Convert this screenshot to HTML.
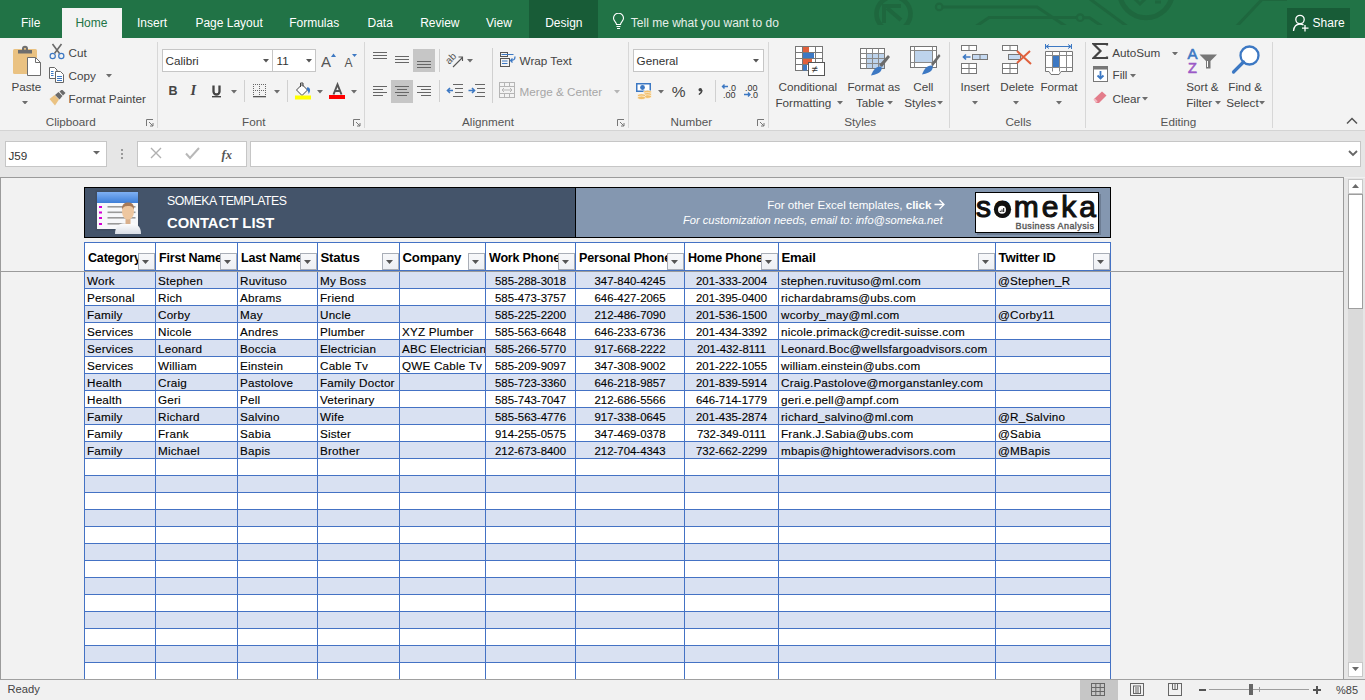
<!DOCTYPE html>
<html><head><meta charset="utf-8"><style>
html,body{margin:0;padding:0;width:1365px;height:700px;overflow:hidden;background:#F1F1F1;font-family:"Liberation Sans",sans-serif;}
#root{position:relative;width:1365px;height:700px;overflow:hidden;}
</style></head><body><div id="root">
<div style="position:absolute;left:0px;top:0px;width:1365px;height:700px;background:#F1F1F1"></div>
<div style="position:absolute;left:0px;top:0px;width:1365px;height:38px;background:#217346"></div>
<svg style="position:absolute;left:850px;top:0px;" width="437" height="25" viewBox="0 0 437 25">
<g fill="none" stroke="#1E673E" stroke-width="3">
<circle cx="43.5" cy="13.8" r="17" stroke-width="4.6"/>
<path d="M51 20 L37 8" stroke-width="4.2"/>
<path d="M34 23 V6 H51" stroke-width="4"/>
<circle cx="89.2" cy="6.9" r="3.3" stroke-width="2.2"/>
<path d="M92.5 6.9 H187 L217 27"/>
<path d="M125 27 L139 17.5 H226.8"/>
<circle cx="230.2" cy="17.7" r="3.3" stroke-width="2.2"/>
<path d="M233.5 17.7 H239.5 L253 27"/>
<path d="M240 -1 L278 27"/>
<circle cx="296" cy="-8.8" r="26.5" stroke-width="5"/>
<path d="M284 -2 L290 4 L296 -2" stroke-width="3"/>
<path d="M305 2 H311" stroke-width="3"/>
<path d="M386 27 L412 -0.5 H440"/>
</g></svg>
<div style="position:absolute;left:62px;top:8px;width:60px;height:30px;background:#F3F3F3"></div>
<div style="position:absolute;left:529px;top:0px;width:69px;height:38px;background:#185C37"></div>
<div style="position:absolute;top:16.94px;font-size:12px;line-height:12px;color:#fff;font-weight:normal;font-family:'Liberation Sans', sans-serif;white-space:nowrap;left:21px;">File</div>
<div style="position:absolute;top:16.94px;font-size:12px;line-height:12px;color:#fff;font-weight:normal;font-family:'Liberation Sans', sans-serif;white-space:nowrap;left:137px;">Insert</div>
<div style="position:absolute;top:16.94px;font-size:12px;line-height:12px;color:#fff;font-weight:normal;font-family:'Liberation Sans', sans-serif;white-space:nowrap;left:195.4px;">Page Layout</div>
<div style="position:absolute;top:16.94px;font-size:12px;line-height:12px;color:#fff;font-weight:normal;font-family:'Liberation Sans', sans-serif;white-space:nowrap;left:289.2px;">Formulas</div>
<div style="position:absolute;top:16.94px;font-size:12px;line-height:12px;color:#fff;font-weight:normal;font-family:'Liberation Sans', sans-serif;white-space:nowrap;left:367.5px;">Data</div>
<div style="position:absolute;top:16.94px;font-size:12px;line-height:12px;color:#fff;font-weight:normal;font-family:'Liberation Sans', sans-serif;white-space:nowrap;left:420.2px;">Review</div>
<div style="position:absolute;top:16.94px;font-size:12px;line-height:12px;color:#fff;font-weight:normal;font-family:'Liberation Sans', sans-serif;white-space:nowrap;left:486px;">View</div>
<div style="position:absolute;top:16.94px;font-size:12px;line-height:12px;color:#fff;font-weight:normal;font-family:'Liberation Sans', sans-serif;white-space:nowrap;left:545.2px;">Design</div>
<div style="position:absolute;top:16.94px;font-size:12px;line-height:12px;color:#217346;font-weight:normal;font-family:'Liberation Sans', sans-serif;white-space:nowrap;left:75.4px;">Home</div>
<svg style="position:absolute;left:612px;top:13px;" width="14" height="17" viewBox="0 0 14 17"><g fill="none" stroke="#fff" stroke-width="1.1">
<path d="M4.5 11.5 C4.5 9 1.5 8 1.5 5.2 A5 5 0 0 1 11.5 5.2 C11.5 8 8.5 9 8.5 11.5 Z"/>
<path d="M4.5 13.5 H8.5 M5 15.5 H8"/></g></svg>
<div style="position:absolute;top:16.94px;font-size:12px;line-height:12px;color:#E6EFE9;font-weight:normal;font-family:'Liberation Sans', sans-serif;white-space:nowrap;left:630.8px;">Tell me what you want to do</div>
<div style="position:absolute;left:1287px;top:8px;width:63px;height:30px;background:#185C37"></div>
<svg style="position:absolute;left:1292px;top:14px;" width="18" height="18" viewBox="0 0 18 18"><g fill="none" stroke="#fff" stroke-width="1.3">
<circle cx="8" cy="5.5" r="4.2"/>
<path d="M1.5 17 C2 12 4.5 10 8 10 C9.5 10 10.5 10.3 11.5 11"/>
<path d="M13 11 V17.5 M10 14.2 H16.5"/></g></svg>
<div style="position:absolute;top:16.94px;font-size:12px;line-height:12px;color:#fff;font-weight:normal;font-family:'Liberation Sans', sans-serif;white-space:nowrap;left:1312.6px;">Share</div>
<div style="position:absolute;left:0px;top:38px;width:1365px;height:92px;background:#F3F3F3"></div>
<div style="position:absolute;left:0px;top:130px;width:1365px;height:1px;background:#D4D4D4"></div>
<div style="position:absolute;left:157px;top:42px;width:1px;height:86px;background:#D7D7D7"></div>
<div style="position:absolute;left:364px;top:42px;width:1px;height:86px;background:#D7D7D7"></div>
<div style="position:absolute;left:628px;top:42px;width:1px;height:86px;background:#D7D7D7"></div>
<div style="position:absolute;left:768px;top:42px;width:1px;height:86px;background:#D7D7D7"></div>
<div style="position:absolute;left:949px;top:42px;width:1px;height:86px;background:#D7D7D7"></div>
<div style="position:absolute;left:1085px;top:42px;width:1px;height:86px;background:#D7D7D7"></div>
<div style="position:absolute;left:1272px;top:42px;width:1px;height:86px;background:#D7D7D7"></div>
<svg style="position:absolute;left:12px;top:45px;" width="31" height="32" viewBox="0 0 31 32">
<rect x="1" y="4" width="24" height="25" rx="1.5" fill="#EAC282"/>
<path d="M6 8.5 V5 H10 V3.8 A3 3 0 0 1 16 3.8 V5 H20 V8.5 Z" fill="#6E6E6E"/>
<circle cx="13" cy="3.8" r="1.1" fill="#EAC282"/>
<path d="M15.5 12.5 H23.5 L28.5 17.5 V30.5 H15.5 Z" fill="#fff" stroke="#6E6E6E" stroke-width="1"/>
<path d="M23.5 12.5 V17.5 H28.5" fill="none" stroke="#6E6E6E" stroke-width="1"/>
</svg>
<div style="position:absolute;top:80.80px;font-size:11.7px;line-height:11.7px;color:#444444;font-weight:normal;font-family:'Liberation Sans', sans-serif;white-space:nowrap;left:11.4px;">Paste</div>
<svg style="position:absolute;left:21.5px;top:100.5px;" width="6" height="3.5" viewBox="0 0 6 3.5"><path d="M0 0 H6 L3.0 3.5 Z" fill="#6D6D6D"/></svg>
<svg style="position:absolute;left:49px;top:43px;" width="16" height="17" viewBox="0 0 16 17"><g fill="none">
<path d="M3.5 1 L10.5 10.5 M12.5 1 L5.5 10.5" stroke="#6A6A6A" stroke-width="1.6"/>
<circle cx="3.7" cy="13" r="2.6" stroke="#3C78C3" stroke-width="1.2"/>
<circle cx="12.3" cy="13" r="2.6" stroke="#3C78C3" stroke-width="1.2"/></g></svg>
<div style="position:absolute;top:46.80px;font-size:11.7px;line-height:11.7px;color:#444444;font-weight:normal;font-family:'Liberation Sans', sans-serif;white-space:nowrap;left:68.6px;">Cut</div>
<svg style="position:absolute;left:48px;top:67px;" width="17" height="16" viewBox="0 0 17 16">
<path d="M1.5 0.5 H6.5 L9 3 V11.5 H1.5 Z" fill="#fff" stroke="#666"/>
<path d="M3 4.5 H5.5 M3 6.5 H5.5 M3 8.5 H5.5" stroke="#3C78C3"/>
<path d="M7.5 4.5 H12.5 L15.5 7.5 V15.5 H7.5 Z" fill="#fff" stroke="#666"/>
<path d="M9 9.5 H14 M9 11.5 H14 M9 13.5 H14" stroke="#3C78C3"/>
</svg>
<div style="position:absolute;top:70.10px;font-size:11.7px;line-height:11.7px;color:#444444;font-weight:normal;font-family:'Liberation Sans', sans-serif;white-space:nowrap;left:68.6px;">Copy</div>
<svg style="position:absolute;left:105.5px;top:74.0px;" width="6" height="3.5" viewBox="0 0 6 3.5"><path d="M0 0 H6 L3.0 3.5 Z" fill="#6D6D6D"/></svg>
<svg style="position:absolute;left:49px;top:90px;" width="17" height="16" viewBox="0 0 17 16">
<path d="M0.5 9 L5.5 5 L10 9.5 L6 15.5 Z" fill="#EAC282"/>
<path d="M6 5 L9.5 2 L13.5 6 L10.5 9.5 Z" fill="#6A6A6A"/>
<path d="M10.5 1.5 L13 -0.5 L16.5 3 L14 5.5 Z" fill="#6A6A6A"/>
</svg>
<div style="position:absolute;top:92.70px;font-size:11.7px;line-height:11.7px;color:#444444;font-weight:normal;font-family:'Liberation Sans', sans-serif;white-space:nowrap;left:68.6px;">Format Painter</div>
<div style="position:absolute;top:115.60px;font-size:11.7px;line-height:11.7px;color:#555;font-weight:normal;font-family:'Liberation Sans', sans-serif;white-space:nowrap;left:45.7px;">Clipboard</div>
<svg style="position:absolute;left:146px;top:119px;" width="8" height="8" viewBox="0 0 8 8"><g fill="none" stroke="#777" stroke-width="1"><path d="M0.5 7 V0.5 H7"/><path d="M3 3 L7 7 M7 4 V7 H4"/></g></svg>
<div style="position:absolute;left:162px;top:49px;width:111px;height:23px;background:#fff;box-sizing:border-box;border:1px solid #C6C6C6"></div>
<div style="position:absolute;left:272px;top:49px;width:44px;height:23px;background:#fff;box-sizing:border-box;border:1px solid #C6C6C6"></div>
<div style="position:absolute;top:54.70px;font-size:11.7px;line-height:11.7px;color:#333;font-weight:normal;font-family:'Liberation Sans', sans-serif;white-space:nowrap;left:165.5px;">Calibri</div>
<div style="position:absolute;top:54.70px;font-size:11.7px;line-height:11.7px;color:#333;font-weight:normal;font-family:'Liberation Sans', sans-serif;white-space:nowrap;left:276.5px;">11</div>
<svg style="position:absolute;left:262.5px;top:59.0px;" width="6" height="3.5" viewBox="0 0 6 3.5"><path d="M0 0 H6 L3.0 3.5 Z" fill="#555"/></svg>
<svg style="position:absolute;left:305.5px;top:59.0px;" width="6" height="3.5" viewBox="0 0 6 3.5"><path d="M0 0 H6 L3.0 3.5 Z" fill="#555"/></svg>
<svg style="position:absolute;left:321px;top:53px;" width="16" height="15" viewBox="0 0 16 15"><text x="0" y="13.5" font-family="Liberation Sans" font-size="15" fill="#555">A</text>
<path d="M10 4 L12.5 0.5 L15 4 Z" fill="#3C78C3"/></svg>
<svg style="position:absolute;left:344px;top:53px;" width="14" height="15" viewBox="0 0 14 15"><text x="0.5" y="13.5" font-family="Liberation Sans" font-size="12" fill="#555">A</text>
<path d="M8 1 H13 L10.5 4 Z" fill="#3C78C3"/></svg>
<div style="position:absolute;top:84.92px;font-size:12.5px;line-height:12.5px;color:#444;font-weight:bold;font-family:'Liberation Sans', sans-serif;white-space:nowrap;left:168.5px;">B</div>
<div style="position:absolute;top:83.23px;font-size:14.5px;line-height:14.5px;color:#444;font-weight:bold;font-family:'Liberation Serif', serif;white-space:nowrap;font-style:italic;left:190.5px;">I</div>
<svg style="position:absolute;left:211px;top:85px;" width="11" height="13" viewBox="0 0 11 13"><path d="M2.5 0.5 V6.5 A3 3 0 0 0 8.5 6.5 V0.5" fill="none" stroke="#444" stroke-width="2.3"/>
<rect x="1" y="11" width="9" height="1.4" fill="#444"/></svg>
<svg style="position:absolute;left:231.0px;top:90.0px;" width="6" height="3.5" viewBox="0 0 6 3.5"><path d="M0 0 H6 L3.0 3.5 Z" fill="#6D6D6D"/></svg>
<div style="position:absolute;left:244px;top:80px;width:1px;height:22px;background:#D0D0D0"></div>
<svg style="position:absolute;left:253px;top:84px;" width="14" height="14" viewBox="0 0 14 14"><rect x="0" y="0" width="1" height="1" fill="#666"/><rect x="0" y="6" width="1" height="1" fill="#666"/><rect x="2" y="0" width="1" height="1" fill="#666"/><rect x="2" y="6" width="1" height="1" fill="#666"/><rect x="4" y="0" width="1" height="1" fill="#666"/><rect x="4" y="6" width="1" height="1" fill="#666"/><rect x="6" y="0" width="1" height="1" fill="#666"/><rect x="6" y="6" width="1" height="1" fill="#666"/><rect x="8" y="0" width="1" height="1" fill="#666"/><rect x="8" y="6" width="1" height="1" fill="#666"/><rect x="10" y="0" width="1" height="1" fill="#666"/><rect x="10" y="6" width="1" height="1" fill="#666"/><rect x="12" y="0" width="1" height="1" fill="#666"/><rect x="12" y="6" width="1" height="1" fill="#666"/><rect x="0" y="0" width="1" height="1" fill="#666"/><rect x="6" y="0" width="1" height="1" fill="#666"/><rect x="12" y="0" width="1" height="1" fill="#666"/><rect x="0" y="2" width="1" height="1" fill="#666"/><rect x="6" y="2" width="1" height="1" fill="#666"/><rect x="12" y="2" width="1" height="1" fill="#666"/><rect x="0" y="4" width="1" height="1" fill="#666"/><rect x="6" y="4" width="1" height="1" fill="#666"/><rect x="12" y="4" width="1" height="1" fill="#666"/><rect x="0" y="6" width="1" height="1" fill="#666"/><rect x="6" y="6" width="1" height="1" fill="#666"/><rect x="12" y="6" width="1" height="1" fill="#666"/><rect x="0" y="8" width="1" height="1" fill="#666"/><rect x="6" y="8" width="1" height="1" fill="#666"/><rect x="12" y="8" width="1" height="1" fill="#666"/><rect x="0" y="10" width="1" height="1" fill="#666"/><rect x="6" y="10" width="1" height="1" fill="#666"/><rect x="12" y="10" width="1" height="1" fill="#666"/><rect x="0" y="12" width="13" height="1.3" fill="#555"/></svg>
<svg style="position:absolute;left:273.5px;top:90.0px;" width="6" height="3.5" viewBox="0 0 6 3.5"><path d="M0 0 H6 L3.0 3.5 Z" fill="#6D6D6D"/></svg>
<div style="position:absolute;left:287px;top:80px;width:1px;height:22px;background:#D0D0D0"></div>
<svg style="position:absolute;left:294px;top:82px;" width="18" height="18" viewBox="0 0 18 18">
<path d="M2.5 8 L8 2.5 L13.5 8 L8 13.5 Z" fill="#fff" stroke="#444" stroke-width="1"/>
<path d="M6.5 5 V1 H9 V4.5" fill="none" stroke="#444" stroke-width="1"/>
<path d="M13.5 5 C16.5 6 17 9 14.5 12 C14.5 10 14 8.5 12.5 7.5 Z" fill="#3C78C3"/>
<rect x="1" y="13.5" width="16" height="4" fill="#FFFF00"/></svg>
<svg style="position:absolute;left:316.5px;top:90.0px;" width="6" height="3.5" viewBox="0 0 6 3.5"><path d="M0 0 H6 L3.0 3.5 Z" fill="#6D6D6D"/></svg>
<svg style="position:absolute;left:328px;top:82px;" width="18" height="18" viewBox="0 0 18 18"><path d="M5.5 12.5 L9.5 2.5 L13.5 12.5 M7 9 H12" fill="none" stroke="#555" stroke-width="2"/>
<rect x="1" y="13" width="16" height="4" fill="#FF0000"/></svg>
<svg style="position:absolute;left:351.0px;top:90.0px;" width="6" height="3.5" viewBox="0 0 6 3.5"><path d="M0 0 H6 L3.0 3.5 Z" fill="#6D6D6D"/></svg>
<div style="position:absolute;top:115.60px;font-size:11.7px;line-height:11.7px;color:#555;font-weight:normal;font-family:'Liberation Sans', sans-serif;white-space:nowrap;left:242px;">Font</div>
<svg style="position:absolute;left:353px;top:119px;" width="8" height="8" viewBox="0 0 8 8"><g fill="none" stroke="#777" stroke-width="1"><path d="M0.5 7 V0.5 H7"/><path d="M3 3 L7 7 M7 4 V7 H4"/></g></svg>
<svg style="position:absolute;left:373px;top:52px;" width="14" height="9" viewBox="0 0 14 9"><rect x="0" y="0" width="14" height="1" fill="#666"/><rect x="0" y="3" width="14" height="1" fill="#666"/><rect x="0" y="6" width="14" height="1" fill="#666"/></svg>
<svg style="position:absolute;left:395px;top:56px;" width="14" height="9" viewBox="0 0 14 9"><rect x="0" y="0" width="14" height="1" fill="#666"/><rect x="0" y="3" width="14" height="1" fill="#666"/><rect x="0" y="6" width="14" height="1" fill="#666"/></svg>
<div style="position:absolute;left:413px;top:49px;width:22px;height:23px;background:#C6C6C6"></div>
<svg style="position:absolute;left:417px;top:61px;" width="14" height="9" viewBox="0 0 14 9"><rect x="0" y="0" width="14" height="1" fill="#666"/><rect x="0" y="3" width="14" height="1" fill="#666"/><rect x="0" y="6" width="14" height="1" fill="#666"/></svg>
<svg style="position:absolute;left:446px;top:51px;" width="20" height="18" viewBox="0 0 20 18"><text x="0" y="10" font-family="Liberation Sans" font-size="10" fill="#555" transform="rotate(-45 6 8)">ab</text>
<path d="M7 16 L16.5 6.5 M12.5 6 H16.5 V10" fill="none" stroke="#555" stroke-width="1.1"/></svg>
<svg style="position:absolute;left:467.0px;top:59.0px;" width="6" height="3.5" viewBox="0 0 6 3.5"><path d="M0 0 H6 L3.0 3.5 Z" fill="#6D6D6D"/></svg>
<div style="position:absolute;left:439px;top:49px;width:1px;height:23px;background:#D0D0D0"></div>
<div style="position:absolute;left:492px;top:48px;width:1px;height:55px;background:#D0D0D0"></div>
<svg style="position:absolute;left:499px;top:51px;" width="19" height="17" viewBox="0 0 19 17"><g fill="none" stroke="#555" stroke-width="1">
<rect x="1.5" y="1.5" width="7" height="4"/><rect x="1.5" y="7.5" width="9" height="8"/></g>
<path d="M2.5 3.5 H14.5 M3 10 H8.5 M3 12.5 H8.5" stroke="#3C78C3" stroke-width="1"/>
<path d="M16 5.5 C16 9 14.5 9.5 11.5 9.5 M13.5 7.5 L11.5 9.5 L13.5 11.5" fill="none" stroke="#3C78C3" stroke-width="1.3"/></svg>
<div style="position:absolute;top:55.10px;font-size:11.7px;line-height:11.7px;color:#444444;font-weight:normal;font-family:'Liberation Sans', sans-serif;white-space:nowrap;left:519.6px;">Wrap Text</div>
<svg style="position:absolute;left:373px;top:86px;" width="14" height="12" viewBox="0 0 14 12"><rect x="0" y="0" width="14" height="1" fill="#666"/><rect x="0" y="3" width="10" height="1" fill="#666"/><rect x="0" y="6" width="14" height="1" fill="#666"/><rect x="0" y="9" width="10" height="1" fill="#666"/></svg>
<div style="position:absolute;left:391px;top:80px;width:22px;height:23px;background:#C6C6C6"></div>
<svg style="position:absolute;left:395px;top:86px;" width="14" height="12" viewBox="0 0 14 12"><rect x="0.0" y="0" width="14" height="1" fill="#666"/><rect x="2.0" y="3" width="10" height="1" fill="#666"/><rect x="0.0" y="6" width="14" height="1" fill="#666"/><rect x="2.0" y="9" width="10" height="1" fill="#666"/></svg>
<svg style="position:absolute;left:417px;top:86px;" width="14" height="12" viewBox="0 0 14 12"><rect x="0" y="0" width="14" height="1" fill="#666"/><rect x="4" y="3" width="10" height="1" fill="#666"/><rect x="0" y="6" width="14" height="1" fill="#666"/><rect x="4" y="9" width="10" height="1" fill="#666"/></svg>
<div style="position:absolute;left:439px;top:80px;width:1px;height:22px;background:#D0D0D0"></div>
<svg style="position:absolute;left:446px;top:84px;" width="18" height="13" viewBox="0 0 18 13"><path d="M7 0.5 H17 M9 4.5 H17 M9 8.5 H17 M7 12.5 H17" stroke="#666"/>
<path d="M7 6.5 H1.5 M4 4 L1.5 6.5 L4 9" fill="none" stroke="#3C78C3" stroke-width="1.6"/></svg>
<svg style="position:absolute;left:468px;top:84px;" width="18" height="13" viewBox="0 0 18 13"><path d="M7 0.5 H17 M9 4.5 H17 M9 8.5 H17 M7 12.5 H17" stroke="#666"/>
<path d="M0.5 6.5 H6.5 M4 4 L6.5 6.5 L4 9" fill="none" stroke="#3C78C3" stroke-width="1.6"/></svg>
<svg style="position:absolute;left:499px;top:82px;" width="17" height="17" viewBox="0 0 17 17"><g fill="none" stroke="#B5B5B5" stroke-width="1"><rect x="0.5" y="0.5" width="15" height="15"/>
<path d="M0.5 4.5 H15.5 M0.5 11.5 H15.5 M5.5 0.5 V4.5 M10.5 0.5 V4.5 M5.5 11.5 V15.5 M10.5 11.5 V15.5 M3 8 H13 M5 6 L3 8 L5 10 M11 6 L13 8 L11 10"/></g></svg>
<div style="position:absolute;top:85.90px;font-size:11.7px;line-height:11.7px;color:#A6A6A6;font-weight:normal;font-family:'Liberation Sans', sans-serif;white-space:nowrap;left:519.6px;">Merge &amp; Center</div>
<svg style="position:absolute;left:613.5px;top:90.0px;" width="6" height="3.5" viewBox="0 0 6 3.5"><path d="M0 0 H6 L3.0 3.5 Z" fill="#B5B5B5"/></svg>
<div style="position:absolute;top:115.60px;font-size:11.7px;line-height:11.7px;color:#555;font-weight:normal;font-family:'Liberation Sans', sans-serif;white-space:nowrap;left:462px;">Alignment</div>
<svg style="position:absolute;left:617px;top:119px;" width="8" height="8" viewBox="0 0 8 8"><g fill="none" stroke="#777" stroke-width="1"><path d="M0.5 7 V0.5 H7"/><path d="M3 3 L7 7 M7 4 V7 H4"/></g></svg>
<div style="position:absolute;left:633px;top:49px;width:131px;height:23px;background:#fff;box-sizing:border-box;border:1px solid #C6C6C6"></div>
<div style="position:absolute;top:54.50px;font-size:11.7px;line-height:11.7px;color:#333;font-weight:normal;font-family:'Liberation Sans', sans-serif;white-space:nowrap;left:636.6px;">General</div>
<svg style="position:absolute;left:753.0px;top:59.0px;" width="6" height="3.5" viewBox="0 0 6 3.5"><path d="M0 0 H6 L3.0 3.5 Z" fill="#555"/></svg>
<svg style="position:absolute;left:635px;top:82px;" width="18" height="18" viewBox="0 0 18 18"><rect x="1" y="1" width="15" height="9" fill="#3C78C3"/>
<rect x="2.5" y="2.5" width="12" height="6" fill="#fff"/>
<circle cx="7.5" cy="5.5" r="2.4" fill="#3C78C3"/>
<g fill="#F0BE6A" stroke="#fff" stroke-width="0.6">
<ellipse cx="12.5" cy="10" rx="4" ry="1.8"/><ellipse cx="12.5" cy="12.3" rx="4" ry="1.8"/><ellipse cx="12.5" cy="14.6" rx="4" ry="1.8"/>
<ellipse cx="6.5" cy="13.5" rx="4" ry="1.8"/><ellipse cx="6.5" cy="15.8" rx="4" ry="1.8"/></g></svg>
<svg style="position:absolute;left:657.5px;top:90.0px;" width="6" height="3.5" viewBox="0 0 6 3.5"><path d="M0 0 H6 L3.0 3.5 Z" fill="#6D6D6D"/></svg>
<div style="position:absolute;top:83.88px;font-size:15.5px;line-height:15.5px;color:#444;font-weight:normal;font-family:'Liberation Sans', sans-serif;white-space:nowrap;left:671.8px;">%</div>
<svg style="position:absolute;left:696px;top:87px;" width="8" height="8" viewBox="0 0 8 8"><circle cx="4.3" cy="2.8" r="1.8" fill="#444"/><path d="M5.9 3 C6 5 4.8 6.5 2.8 7.5" fill="none" stroke="#444" stroke-width="1.3"/></svg>
<div style="position:absolute;left:715px;top:80px;width:1px;height:22px;background:#D0D0D0"></div>
<svg style="position:absolute;left:721px;top:83px;" width="18" height="15" viewBox="0 0 18 15"><path d="M7 3.5 H1.5 M3.5 1.5 L1.5 3.5 L3.5 5.5" fill="none" stroke="#3C78C3" stroke-width="1.4"/>
<text x="7.5" y="7.5" font-family="Liberation Sans" font-size="9" fill="#333">.0</text>
<text x="2" y="15" font-family="Liberation Sans" font-size="9" fill="#333">.00</text></svg>
<svg style="position:absolute;left:743px;top:83px;" width="18" height="15" viewBox="0 0 18 15"><text x="2" y="7.5" font-family="Liberation Sans" font-size="9" fill="#333">.00</text>
<path d="M1 11.5 H7 M5 9.5 L7 11.5 L5 13.5" fill="none" stroke="#3C78C3" stroke-width="1.4"/>
<text x="7.5" y="15" font-family="Liberation Sans" font-size="9" fill="#333">.0</text></svg>
<div style="position:absolute;top:115.60px;font-size:11.7px;line-height:11.7px;color:#555;font-weight:normal;font-family:'Liberation Sans', sans-serif;white-space:nowrap;left:670.6px;">Number</div>
<svg style="position:absolute;left:757px;top:119px;" width="8" height="8" viewBox="0 0 8 8"><g fill="none" stroke="#777" stroke-width="1"><path d="M0.5 7 V0.5 H7"/><path d="M3 3 L7 7 M7 4 V7 H4"/></g></svg>
<svg style="position:absolute;left:794px;top:45px;" width="32" height="32" viewBox="0 0 32 32">
<g fill="#fff" stroke="#777" stroke-width="1">
<rect x="1.5" y="1.5" width="27" height="24"/></g>
<rect x="9" y="2" width="6" height="5.5" fill="#E0603C"/>
<rect x="9" y="8" width="11" height="5.5" fill="#3C78C3"/>
<rect x="9" y="14" width="9" height="5.5" fill="#E0603C"/>
<rect x="9" y="20" width="4" height="5.5" fill="#3C78C3"/>
<path d="M1.5 7.5 H28.5 M1.5 13.5 H28.5 M1.5 19.5 H28.5 M8.5 1.5 V25.5 M21.5 1.5 V25.5" stroke="#777" fill="none"/>
<rect x="14.5" y="17.5" width="16" height="13" fill="#fff" stroke="#555"/>
<text x="17.5" y="28" font-family="Liberation Sans" font-size="11" fill="#333">≠</text></svg>
<div style="position:absolute;top:80.90px;font-size:11.7px;line-height:11.7px;color:#444444;font-weight:normal;font-family:'Liberation Sans', sans-serif;white-space:nowrap;left:778.5px;">Conditional</div>
<div style="position:absolute;top:96.60px;font-size:11.7px;line-height:11.7px;color:#444444;font-weight:normal;font-family:'Liberation Sans', sans-serif;white-space:nowrap;left:775.4px;">Formatting</div>
<svg style="position:absolute;left:836.5px;top:101.0px;" width="6" height="3.5" viewBox="0 0 6 3.5"><path d="M0 0 H6 L3.0 3.5 Z" fill="#6D6D6D"/></svg>
<svg style="position:absolute;left:859px;top:47px;" width="32" height="30" viewBox="0 0 32 30">
<rect x="1.5" y="1.5" width="24" height="20" fill="#fff" stroke="#777"/>
<rect x="7" y="6" width="18" height="15" fill="#BDD3EC"/>
<path d="M1.5 6.5 H25.5 M1.5 11.5 H25.5 M1.5 16.5 H25.5 M7.5 1.5 V21.5 M13.5 1.5 V21.5 M19.5 1.5 V21.5" stroke="#888" fill="none"/>
<path d="M20 18 L29 8 L31 10 L23 20 Z" fill="#6B6B6B"/>
<path d="M12 28.5 C14 23 17 19 22 19.5 C24 22 22 27 12 28.5 Z" fill="#3C78C3"/></svg>
<div style="position:absolute;top:80.90px;font-size:11.7px;line-height:11.7px;color:#444444;font-weight:normal;font-family:'Liberation Sans', sans-serif;white-space:nowrap;left:847.4px;">Format as</div>
<div style="position:absolute;top:96.60px;font-size:11.7px;line-height:11.7px;color:#444444;font-weight:normal;font-family:'Liberation Sans', sans-serif;white-space:nowrap;left:856px;">Table</div>
<svg style="position:absolute;left:886.5px;top:101.0px;" width="6" height="3.5" viewBox="0 0 6 3.5"><path d="M0 0 H6 L3.0 3.5 Z" fill="#6D6D6D"/></svg>
<svg style="position:absolute;left:909px;top:45px;" width="32" height="30" viewBox="0 0 32 30">
<rect x="1.5" y="1.5" width="26" height="21" fill="#fff" stroke="#777"/>
<rect x="6" y="6" width="17" height="11" fill="#BDD3EC"/>
<path d="M1.5 5.5 H27.5 M1.5 17.5 H27.5 M5.5 1.5 V22.5 M23.5 1.5 V22.5" stroke="#888" fill="none"/>
<path d="M22 19 L30 9 L31.5 11 L24 21 Z" fill="#6B6B6B"/>
<path d="M13 29.5 C15 24 18 20 23 20.5 C25 23 23 28 13 29.5 Z" fill="#3C78C3"/></svg>
<div style="position:absolute;top:80.90px;font-size:11.7px;line-height:11.7px;color:#444444;font-weight:normal;font-family:'Liberation Sans', sans-serif;white-space:nowrap;left:913.2px;">Cell</div>
<div style="position:absolute;top:96.60px;font-size:11.7px;line-height:11.7px;color:#444444;font-weight:normal;font-family:'Liberation Sans', sans-serif;white-space:nowrap;left:904.2px;">Styles</div>
<svg style="position:absolute;left:936.5px;top:101.0px;" width="6" height="3.5" viewBox="0 0 6 3.5"><path d="M0 0 H6 L3.0 3.5 Z" fill="#6D6D6D"/></svg>
<div style="position:absolute;top:115.60px;font-size:11.7px;line-height:11.7px;color:#555;font-weight:normal;font-family:'Liberation Sans', sans-serif;white-space:nowrap;left:844.3px;">Styles</div>
<svg style="position:absolute;left:961px;top:45px;" width="28" height="29" viewBox="0 0 28 29"><g fill="#fff" stroke="#777">
<rect x="0.5" y="0.5" width="15" height="5"/><path d="M8 0.5 V5.5"/>
<rect x="11.5" y="9.5" width="15" height="5" fill="#C5D9F1"/><path d="M19 9.5 V14.5"/>
<rect x="0.5" y="18.5" width="15" height="10"/><path d="M8 18.5 V28.5 M0.5 23.5 H15.5"/></g>
<path d="M9.5 12 H2.5 M5 9.5 L2.5 12 L5 14.5" fill="none" stroke="#3C78C3" stroke-width="1.7"/></svg>
<div style="position:absolute;top:80.90px;font-size:11.7px;line-height:11.7px;color:#444444;font-weight:normal;font-family:'Liberation Sans', sans-serif;white-space:nowrap;left:960.4px;">Insert</div>
<svg style="position:absolute;left:971.6px;top:101.0px;" width="6" height="3.5" viewBox="0 0 6 3.5"><path d="M0 0 H6 L3.0 3.5 Z" fill="#6D6D6D"/></svg>
<svg style="position:absolute;left:1002px;top:45px;" width="31" height="29" viewBox="0 0 31 29"><g fill="#fff" stroke="#777">
<rect x="0.5" y="0.5" width="15" height="5"/><path d="M8 0.5 V5.5"/>
<rect x="6.5" y="9.5" width="12" height="5" fill="#C5D9F1"/>
<rect x="0.5" y="18.5" width="15" height="10"/><path d="M8 18.5 V28.5 M0.5 23.5 H15.5"/></g>
<path d="M15 6 L29 19 M28 6 L15 18" stroke="#E0603C" stroke-width="2"/></svg>
<div style="position:absolute;top:80.90px;font-size:11.7px;line-height:11.7px;color:#444444;font-weight:normal;font-family:'Liberation Sans', sans-serif;white-space:nowrap;left:1000.3px;">Delete</div>
<svg style="position:absolute;left:1013.3px;top:101.0px;" width="6" height="3.5" viewBox="0 0 6 3.5"><path d="M0 0 H6 L3.0 3.5 Z" fill="#6D6D6D"/></svg>
<svg style="position:absolute;left:1044px;top:44px;" width="30" height="32" viewBox="0 0 30 32">
<path d="M1.5 0 V5 M27.5 0 V5 M2 2.5 H27 M5 0.5 L2 2.5 L5 4.5 M24 0.5 L27 2.5 L24 4.5" fill="none" stroke="#3C78C3" stroke-width="1"/>
<path d="M1.5 7.5 H28.5 V27.5 H17 L15 30.5 H7 L5 27.5 H1.5 Z" fill="#fff" stroke="#777"/>
<path d="M1.5 11.5 H28.5 M1.5 23.5 H28.5 M8.5 7.5 V27.5 M15.5 7.5 V27.5 M22.5 7.5 V27.5" stroke="#888" fill="none"/>
<rect x="9" y="12" width="6" height="11" fill="#3C78C3"/></svg>
<div style="position:absolute;top:80.90px;font-size:11.7px;line-height:11.7px;color:#444444;font-weight:normal;font-family:'Liberation Sans', sans-serif;white-space:nowrap;left:1040.4px;">Format</div>
<svg style="position:absolute;left:1056.4px;top:101.0px;" width="6" height="3.5" viewBox="0 0 6 3.5"><path d="M0 0 H6 L3.0 3.5 Z" fill="#6D6D6D"/></svg>
<div style="position:absolute;top:115.60px;font-size:11.7px;line-height:11.7px;color:#555;font-weight:normal;font-family:'Liberation Sans', sans-serif;white-space:nowrap;left:1005.4px;">Cells</div>
<svg style="position:absolute;left:1092px;top:43px;" width="17" height="17" viewBox="0 0 17 17"><path d="M15 2.5 V1 H1.5 L8.5 8 L1.5 15 H15 V13.5" fill="none" stroke="#444" stroke-width="2.2"/></svg>
<div style="position:absolute;top:46.90px;font-size:11.7px;line-height:11.7px;color:#444444;font-weight:normal;font-family:'Liberation Sans', sans-serif;white-space:nowrap;left:1112.2px;">AutoSum</div>
<svg style="position:absolute;left:1171.5px;top:51.5px;" width="6" height="3.5" viewBox="0 0 6 3.5"><path d="M0 0 H6 L3.0 3.5 Z" fill="#6D6D6D"/></svg>
<svg style="position:absolute;left:1093px;top:66px;" width="16" height="17" viewBox="0 0 16 17"><rect x="0.5" y="0.5" width="14" height="15" fill="#fff" stroke="#777"/>
<rect x="0.5" y="0.5" width="14" height="3" fill="#777"/>
<path d="M7.5 5 V12.5 M4.5 9.5 L7.5 12.5 L10.5 9.5" fill="none" stroke="#3C78C3" stroke-width="1.8"/></svg>
<div style="position:absolute;top:69.40px;font-size:11.7px;line-height:11.7px;color:#444444;font-weight:normal;font-family:'Liberation Sans', sans-serif;white-space:nowrap;left:1112.5px;">Fill</div>
<svg style="position:absolute;left:1129.5px;top:74.0px;" width="6" height="3.5" viewBox="0 0 6 3.5"><path d="M0 0 H6 L3.0 3.5 Z" fill="#6D6D6D"/></svg>
<svg style="position:absolute;left:1093px;top:90px;" width="15" height="14" viewBox="0 0 15 14"><path d="M1 9 L9 1.5 L13.5 5.5 L6 13 L3 13 Z" fill="#E37C8A"/><path d="M1 9 L4 12" stroke="#F3B9C1" stroke-width="2"/></svg>
<div style="position:absolute;top:92.60px;font-size:11.7px;line-height:11.7px;color:#444444;font-weight:normal;font-family:'Liberation Sans', sans-serif;white-space:nowrap;left:1112.5px;">Clear</div>
<svg style="position:absolute;left:1141.5px;top:97.0px;" width="6" height="3.5" viewBox="0 0 6 3.5"><path d="M0 0 H6 L3.0 3.5 Z" fill="#6D6D6D"/></svg>
<svg style="position:absolute;left:1187px;top:46px;" width="31" height="28" viewBox="0 0 31 28"><text x="0.5" y="12.5" font-family="Liberation Sans" font-size="15" fill="#3C78C3" stroke="#3C78C3" stroke-width="0.6">A</text>
<text x="1" y="27" font-family="Liberation Sans" font-size="14.5" fill="#9B59C6" stroke="#9B59C6" stroke-width="0.6">Z</text>
<path d="M12.5 8.5 H30 L23.5 15 V22.5 H19 V15 Z" fill="#777"/><path d="M20.5 15 V21" stroke="#fff" stroke-width="1"/></svg>
<div style="position:absolute;top:80.80px;font-size:11.7px;line-height:11.7px;color:#444444;font-weight:normal;font-family:'Liberation Sans', sans-serif;white-space:nowrap;left:1186.2px;">Sort &amp;</div>
<div style="position:absolute;top:97.00px;font-size:11.7px;line-height:11.7px;color:#444444;font-weight:normal;font-family:'Liberation Sans', sans-serif;white-space:nowrap;left:1186.2px;">Filter</div>
<svg style="position:absolute;left:1214.7px;top:101.0px;" width="6" height="3.5" viewBox="0 0 6 3.5"><path d="M0 0 H6 L3.0 3.5 Z" fill="#6D6D6D"/></svg>
<svg style="position:absolute;left:1231px;top:45px;" width="30" height="30" viewBox="0 0 30 30"><circle cx="18.5" cy="10.5" r="9" fill="#fff" stroke="#3C78C3" stroke-width="2.3"/>
<path d="M12.5 17 L2.5 27" stroke="#3C78C3" stroke-width="3.2" stroke-linecap="round"/></svg>
<div style="position:absolute;top:80.80px;font-size:11.7px;line-height:11.7px;color:#444444;font-weight:normal;font-family:'Liberation Sans', sans-serif;white-space:nowrap;left:1228.3px;">Find &amp;</div>
<div style="position:absolute;top:97.00px;font-size:11.7px;line-height:11.7px;color:#444444;font-weight:normal;font-family:'Liberation Sans', sans-serif;white-space:nowrap;left:1226.2px;">Select</div>
<svg style="position:absolute;left:1259.4px;top:101.0px;" width="6" height="3.5" viewBox="0 0 6 3.5"><path d="M0 0 H6 L3.0 3.5 Z" fill="#6D6D6D"/></svg>
<div style="position:absolute;top:115.60px;font-size:11.7px;line-height:11.7px;color:#555;font-weight:normal;font-family:'Liberation Sans', sans-serif;white-space:nowrap;left:1160.6px;">Editing</div>
<svg style="position:absolute;left:1346px;top:117px;" width="12" height="8" viewBox="0 0 12 8"><path d="M1 6.5 L6 1.5 L11 6.5" fill="none" stroke="#555" stroke-width="1.5"/></svg>
<div style="position:absolute;left:0px;top:131px;width:1365px;height:46px;background:#E6E6E6"></div>
<div style="position:absolute;left:5px;top:141px;width:102px;height:26px;background:#fff;box-sizing:border-box;border:1px solid #C6C6C6"></div>
<div style="position:absolute;top:149.60px;font-size:11.7px;line-height:11.7px;color:#333;font-weight:normal;font-family:'Liberation Sans', sans-serif;white-space:nowrap;left:8.5px;">J59</div>
<svg style="position:absolute;left:93.0px;top:151.0px;" width="7" height="3.5" viewBox="0 0 7 3.5"><path d="M0 0 H7 L3.5 3.5 Z" fill="#666"/></svg>
<div style="position:absolute;left:121px;top:149px;width:2px;height:2px;background:#9A9A9A"></div>
<div style="position:absolute;left:121px;top:153px;width:2px;height:2px;background:#9A9A9A"></div>
<div style="position:absolute;left:121px;top:157px;width:2px;height:2px;background:#9A9A9A"></div>
<div style="position:absolute;left:137px;top:141px;width:110px;height:26px;background:#fff;box-sizing:border-box;border:1px solid #C6C6C6"></div>
<svg style="position:absolute;left:150px;top:147px;" width="12" height="12" viewBox="0 0 12 12"><path d="M1 1 L11 11 M11 1 L1 11" stroke="#B0B0B0" stroke-width="1.4"/></svg>
<svg style="position:absolute;left:185px;top:147px;" width="15" height="13" viewBox="0 0 15 13"><path d="M1 6.5 L5 11 L14 1" fill="none" stroke="#B8B8B8" stroke-width="2"/></svg>
<div style="position:absolute;top:148.92px;font-size:12.5px;line-height:12.5px;color:#555;font-weight:bold;font-family:'Liberation Serif', serif;white-space:nowrap;font-style:italic;left:221.5px;">fx</div>
<div style="position:absolute;left:250px;top:141px;width:111px;height:26px;background:#fff;box-sizing:border-box;border:1px solid #C6C6C6"></div>
<div style="position:absolute;left:250px;top:141px;width:1111px;height:26px;background:#fff;box-sizing:border-box;border:1px solid #C6C6C6"></div>
<svg style="position:absolute;left:1348px;top:150px;" width="10" height="7" viewBox="0 0 10 7"><path d="M1 1 L5 5 L9 1" fill="none" stroke="#666" stroke-width="1.8"/></svg>
<div style="position:absolute;left:0px;top:177px;width:1344px;height:502px;background:#F2F2F2"></div>
<div style="position:absolute;left:0px;top:177px;width:1344px;height:1px;background:#9B9B9B"></div>
<div style="position:absolute;left:0px;top:177px;width:1px;height:502px;background:#9B9B9B"></div>
<div style="position:absolute;left:1343px;top:177px;width:1px;height:502px;background:#9B9B9B"></div>
<div style="position:absolute;left:1344px;top:178px;width:21px;height:501px;background:#E6E6E6"></div>
<div style="position:absolute;left:1px;top:271px;width:1342px;height:1px;background:#9E9E9E"></div>
<div style="position:absolute;left:84px;top:187px;width:1027px;height:51px;background:#44546A;box-sizing:border-box;border:1px solid #000"></div>
<div style="position:absolute;left:576px;top:188px;width:534px;height:49px;background:#8497B0"></div>
<div style="position:absolute;left:575px;top:188px;width:1px;height:49px;background:#000"></div>
<div style="position:absolute;left:84px;top:242px;width:1027px;height:29px;background:#fff"></div>
<div style="position:absolute;left:84px;top:272px;width:1027px;height:16px;background:#D9E1F2"></div>
<div style="position:absolute;left:84px;top:289px;width:1027px;height:16px;background:#fff"></div>
<div style="position:absolute;left:84px;top:306px;width:1027px;height:16px;background:#D9E1F2"></div>
<div style="position:absolute;left:84px;top:323px;width:1027px;height:16px;background:#fff"></div>
<div style="position:absolute;left:84px;top:340px;width:1027px;height:16px;background:#D9E1F2"></div>
<div style="position:absolute;left:84px;top:357px;width:1027px;height:16px;background:#fff"></div>
<div style="position:absolute;left:84px;top:374px;width:1027px;height:16px;background:#D9E1F2"></div>
<div style="position:absolute;left:84px;top:391px;width:1027px;height:16px;background:#fff"></div>
<div style="position:absolute;left:84px;top:408px;width:1027px;height:16px;background:#D9E1F2"></div>
<div style="position:absolute;left:84px;top:425px;width:1027px;height:16px;background:#fff"></div>
<div style="position:absolute;left:84px;top:442px;width:1027px;height:16px;background:#D9E1F2"></div>
<div style="position:absolute;left:84px;top:459px;width:1027px;height:16px;background:#fff"></div>
<div style="position:absolute;left:84px;top:476px;width:1027px;height:16px;background:#D9E1F2"></div>
<div style="position:absolute;left:84px;top:493px;width:1027px;height:16px;background:#fff"></div>
<div style="position:absolute;left:84px;top:510px;width:1027px;height:16px;background:#D9E1F2"></div>
<div style="position:absolute;left:84px;top:527px;width:1027px;height:16px;background:#fff"></div>
<div style="position:absolute;left:84px;top:544px;width:1027px;height:16px;background:#D9E1F2"></div>
<div style="position:absolute;left:84px;top:561px;width:1027px;height:16px;background:#fff"></div>
<div style="position:absolute;left:84px;top:578px;width:1027px;height:16px;background:#D9E1F2"></div>
<div style="position:absolute;left:84px;top:595px;width:1027px;height:16px;background:#fff"></div>
<div style="position:absolute;left:84px;top:612px;width:1027px;height:16px;background:#D9E1F2"></div>
<div style="position:absolute;left:84px;top:629px;width:1027px;height:16px;background:#fff"></div>
<div style="position:absolute;left:84px;top:646px;width:1027px;height:16px;background:#D9E1F2"></div>
<div style="position:absolute;left:84px;top:663px;width:1027px;height:16px;background:#fff"></div>
<div style="position:absolute;left:84px;top:242px;width:1027px;height:1px;background:#4472C4"></div>
<div style="position:absolute;left:84px;top:270px;width:1027px;height:1px;background:#4472C4"></div>
<div style="position:absolute;left:84px;top:288px;width:1027px;height:1px;background:#4472C4"></div>
<div style="position:absolute;left:84px;top:305px;width:1027px;height:1px;background:#4472C4"></div>
<div style="position:absolute;left:84px;top:322px;width:1027px;height:1px;background:#4472C4"></div>
<div style="position:absolute;left:84px;top:339px;width:1027px;height:1px;background:#4472C4"></div>
<div style="position:absolute;left:84px;top:356px;width:1027px;height:1px;background:#4472C4"></div>
<div style="position:absolute;left:84px;top:373px;width:1027px;height:1px;background:#4472C4"></div>
<div style="position:absolute;left:84px;top:390px;width:1027px;height:1px;background:#4472C4"></div>
<div style="position:absolute;left:84px;top:407px;width:1027px;height:1px;background:#4472C4"></div>
<div style="position:absolute;left:84px;top:424px;width:1027px;height:1px;background:#4472C4"></div>
<div style="position:absolute;left:84px;top:441px;width:1027px;height:1px;background:#4472C4"></div>
<div style="position:absolute;left:84px;top:458px;width:1027px;height:1px;background:#4472C4"></div>
<div style="position:absolute;left:84px;top:475px;width:1027px;height:1px;background:#4472C4"></div>
<div style="position:absolute;left:84px;top:492px;width:1027px;height:1px;background:#4472C4"></div>
<div style="position:absolute;left:84px;top:509px;width:1027px;height:1px;background:#4472C4"></div>
<div style="position:absolute;left:84px;top:526px;width:1027px;height:1px;background:#4472C4"></div>
<div style="position:absolute;left:84px;top:543px;width:1027px;height:1px;background:#4472C4"></div>
<div style="position:absolute;left:84px;top:560px;width:1027px;height:1px;background:#4472C4"></div>
<div style="position:absolute;left:84px;top:577px;width:1027px;height:1px;background:#4472C4"></div>
<div style="position:absolute;left:84px;top:594px;width:1027px;height:1px;background:#4472C4"></div>
<div style="position:absolute;left:84px;top:611px;width:1027px;height:1px;background:#4472C4"></div>
<div style="position:absolute;left:84px;top:628px;width:1027px;height:1px;background:#4472C4"></div>
<div style="position:absolute;left:84px;top:645px;width:1027px;height:1px;background:#4472C4"></div>
<div style="position:absolute;left:84px;top:662px;width:1027px;height:1px;background:#4472C4"></div>
<div style="position:absolute;left:84px;top:242px;width:1px;height:437px;background:#4472C4"></div>
<div style="position:absolute;left:155px;top:242px;width:1px;height:437px;background:#4472C4"></div>
<div style="position:absolute;left:237px;top:242px;width:1px;height:437px;background:#4472C4"></div>
<div style="position:absolute;left:317px;top:242px;width:1px;height:437px;background:#4472C4"></div>
<div style="position:absolute;left:399px;top:242px;width:1px;height:437px;background:#4472C4"></div>
<div style="position:absolute;left:485px;top:242px;width:1px;height:437px;background:#4472C4"></div>
<div style="position:absolute;left:575px;top:242px;width:1px;height:437px;background:#4472C4"></div>
<div style="position:absolute;left:684px;top:242px;width:1px;height:437px;background:#4472C4"></div>
<div style="position:absolute;left:778px;top:242px;width:1px;height:437px;background:#4472C4"></div>
<div style="position:absolute;left:995px;top:242px;width:1px;height:437px;background:#4472C4"></div>
<div style="position:absolute;left:1110px;top:242px;width:1px;height:437px;background:#4472C4"></div>
<div style="position:absolute;left:1px;top:271px;width:1342px;height:1px;background:#9B9B9B"></div>
<svg style="position:absolute;left:94px;top:189px;" width="50" height="47" viewBox="0 0 50 47">
<defs><linearGradient id="bh" x1="0" y1="0" x2="0" y2="1"><stop offset="0" stop-color="#7FB0F2"/><stop offset="1" stop-color="#3D7ED8"/></linearGradient>
<linearGradient id="bd" x1="0" y1="0" x2="0" y2="1"><stop offset="0" stop-color="#FFFFFF"/><stop offset="1" stop-color="#D9DEE6"/></linearGradient></defs>
<rect x="1.5" y="1.5" width="43" height="40" fill="#3A4658" opacity="0.5"/>
<rect x="3" y="3" width="41" height="37" fill="#F7F8FA"/>
<rect x="3" y="3" width="41" height="11" fill="url(#bh)"/>
<g fill="#D400D4"><rect x="5" y="17" width="3" height="2"/><rect x="5" y="22.5" width="3" height="2"/><rect x="5" y="28" width="3" height="2"/><rect x="5" y="34" width="3" height="2"/></g>
<g fill="#9A9A9A"><rect x="13.5" y="17" width="28" height="1.6"/><rect x="13.5" y="22.5" width="28" height="1.6"/><rect x="13.5" y="28" width="28" height="1.6"/><rect x="13.5" y="34" width="22" height="1.6"/></g>
<path d="M21 45 C21 37 25 34 34 34 C43 34 47 37 47 45 Z" fill="url(#bd)"/>
<rect x="31.5" y="29" width="5" height="6" fill="#D9B08C"/>
<ellipse cx="34" cy="22.5" rx="6" ry="8" fill="#EEC7A0"/>
<path d="M28 21 C27.5 15 31 13.5 34 13.5 C37.5 13.5 40.5 15 40 21 C39 17 36 17 34 17 C31.5 17 29 17.5 28 21 Z" fill="#A77A58"/>
</svg>
<div style="position:absolute;top:195.49px;font-size:12.3px;line-height:12.3px;color:#FFFFFF;font-weight:normal;font-family:'Liberation Sans', sans-serif;white-space:nowrap;left:167px;letter-spacing:-0.5px;">SOMEKA TEMPLATES</div>
<div style="position:absolute;top:216.17px;font-size:14.8px;line-height:14.8px;color:#FFFFFF;font-weight:bold;font-family:'Liberation Sans', sans-serif;white-space:nowrap;left:167px;letter-spacing:0px;">CONTACT LIST</div>
<div style="position:absolute;right:433.5px;top:198.58px;font:11.6px/11.6px 'Liberation Sans',sans-serif;color:#fff;white-space:nowrap;">For other Excel templates, <b>click</b></div>
<svg style="position:absolute;left:934px;top:199px;" width="11" height="11" viewBox="0 0 11 11"><path d="M0.5 5.5 H9.5 M5.5 1 L10 5.5 L5.5 10" fill="none" stroke="#fff" stroke-width="1.3"/></svg>
<div style="position:absolute;top:215.46px;font-size:11.15px;line-height:11.15px;color:#FFFFFF;font-weight:normal;font-family:'Liberation Sans', sans-serif;white-space:nowrap;font-style:italic;right:422.5px;">For customization needs, email to: info@someka.net</div>
<div style="position:absolute;left:977px;top:194px;width:124px;height:41px;background:#5D6C80;opacity:0.6"></div>
<div style="position:absolute;left:975px;top:192px;width:124px;height:41px;background:#fff;box-sizing:border-box;border:1px solid #000"></div>
<div style="position:absolute;top:192.30px;font-size:30px;line-height:30px;color:#111;font-weight:normal;font-family:'Liberation Sans', sans-serif;white-space:nowrap;left:976px;letter-spacing:3px;-webkit-text-stroke:1.1px #111;">someka</div>
<div style="position:absolute;top:222.38px;font-size:9px;line-height:9px;color:#555;font-weight:normal;font-family:'Liberation Sans', sans-serif;white-space:nowrap;left:1015.5px;letter-spacing:0.4px;-webkit-text-stroke:0.35px #555;">Business Analysis</div>
<svg style="position:absolute;left:993px;top:200px;" width="19" height="19" viewBox="0 0 19 19"><circle cx="9.5" cy="9.3" r="8.6" fill="#111"/><circle cx="9" cy="9.8" r="4" fill="#fff"/><path d="M7.3 12 V10.8 M9 12 V9.5 M10.7 12 V8" stroke="#111" stroke-width="1"/></svg>
<div style="position:absolute;left:85px;top:243px;width:70px;height:27px;overflow:hidden;"><div style="position:absolute;left:2.5px;top:7.83px;font:bold 13.2px/13.2px 'Liberation Sans',sans-serif;color:#000;white-space:nowrap;letter-spacing:-0.2px;transform-origin:0 0;transform:scaleX(0.95)">Category</div></div>
<div style="position:absolute;left:138px;top:253px;width:17px;height:17px;box-sizing:border-box;border:1px solid #A9AEB7;background:linear-gradient(#F7F8FA,#EEF0F4)"></div>
<svg style="position:absolute;left:142px;top:260px;" width="7" height="4" viewBox="0 0 7 4"><path d="M0 0 H7 L3.5 4 Z" fill="#555"/></svg>
<div style="position:absolute;left:156px;top:243px;width:81px;height:27px;overflow:hidden;"><div style="position:absolute;left:2.5px;top:7.83px;font:bold 13.2px/13.2px 'Liberation Sans',sans-serif;color:#000;white-space:nowrap;letter-spacing:-0.2px;transform-origin:0 0;transform:scaleX(0.95)">First Name</div></div>
<div style="position:absolute;left:220px;top:253px;width:17px;height:17px;box-sizing:border-box;border:1px solid #A9AEB7;background:linear-gradient(#F7F8FA,#EEF0F4)"></div>
<svg style="position:absolute;left:224px;top:260px;" width="7" height="4" viewBox="0 0 7 4"><path d="M0 0 H7 L3.5 4 Z" fill="#555"/></svg>
<div style="position:absolute;left:238px;top:243px;width:79px;height:27px;overflow:hidden;"><div style="position:absolute;left:2.5px;top:7.83px;font:bold 13.2px/13.2px 'Liberation Sans',sans-serif;color:#000;white-space:nowrap;letter-spacing:-0.2px;transform-origin:0 0;transform:scaleX(0.95)">Last Name</div></div>
<div style="position:absolute;left:300px;top:253px;width:17px;height:17px;box-sizing:border-box;border:1px solid #A9AEB7;background:linear-gradient(#F7F8FA,#EEF0F4)"></div>
<svg style="position:absolute;left:304px;top:260px;" width="7" height="4" viewBox="0 0 7 4"><path d="M0 0 H7 L3.5 4 Z" fill="#555"/></svg>
<div style="position:absolute;left:318px;top:243px;width:81px;height:27px;overflow:hidden;"><div style="position:absolute;left:2.5px;top:7.83px;font:bold 13.2px/13.2px 'Liberation Sans',sans-serif;color:#000;white-space:nowrap;letter-spacing:-0.2px;transform-origin:0 0;transform:scaleX(1)">Status</div></div>
<div style="position:absolute;left:382px;top:253px;width:17px;height:17px;box-sizing:border-box;border:1px solid #A9AEB7;background:linear-gradient(#F7F8FA,#EEF0F4)"></div>
<svg style="position:absolute;left:386px;top:260px;" width="7" height="4" viewBox="0 0 7 4"><path d="M0 0 H7 L3.5 4 Z" fill="#555"/></svg>
<div style="position:absolute;left:400px;top:243px;width:85px;height:27px;overflow:hidden;"><div style="position:absolute;left:2.5px;top:7.83px;font:bold 13.2px/13.2px 'Liberation Sans',sans-serif;color:#000;white-space:nowrap;letter-spacing:-0.2px;transform-origin:0 0;transform:scaleX(1)">Company</div></div>
<div style="position:absolute;left:468px;top:253px;width:17px;height:17px;box-sizing:border-box;border:1px solid #A9AEB7;background:linear-gradient(#F7F8FA,#EEF0F4)"></div>
<svg style="position:absolute;left:472px;top:260px;" width="7" height="4" viewBox="0 0 7 4"><path d="M0 0 H7 L3.5 4 Z" fill="#555"/></svg>
<div style="position:absolute;left:486px;top:243px;width:89px;height:27px;overflow:hidden;"><div style="position:absolute;left:2.5px;top:7.83px;font:bold 13.2px/13.2px 'Liberation Sans',sans-serif;color:#000;white-space:nowrap;letter-spacing:-0.2px;transform-origin:0 0;transform:scaleX(0.95)">Work Phone</div></div>
<div style="position:absolute;left:558px;top:253px;width:17px;height:17px;box-sizing:border-box;border:1px solid #A9AEB7;background:linear-gradient(#F7F8FA,#EEF0F4)"></div>
<svg style="position:absolute;left:562px;top:260px;" width="7" height="4" viewBox="0 0 7 4"><path d="M0 0 H7 L3.5 4 Z" fill="#555"/></svg>
<div style="position:absolute;left:576px;top:243px;width:108px;height:27px;overflow:hidden;"><div style="position:absolute;left:2.5px;top:7.83px;font:bold 13.2px/13.2px 'Liberation Sans',sans-serif;color:#000;white-space:nowrap;letter-spacing:-0.2px;transform-origin:0 0;transform:scaleX(0.95)">Personal Phone</div></div>
<div style="position:absolute;left:667px;top:253px;width:17px;height:17px;box-sizing:border-box;border:1px solid #A9AEB7;background:linear-gradient(#F7F8FA,#EEF0F4)"></div>
<svg style="position:absolute;left:671px;top:260px;" width="7" height="4" viewBox="0 0 7 4"><path d="M0 0 H7 L3.5 4 Z" fill="#555"/></svg>
<div style="position:absolute;left:685px;top:243px;width:93px;height:27px;overflow:hidden;"><div style="position:absolute;left:2.5px;top:7.83px;font:bold 13.2px/13.2px 'Liberation Sans',sans-serif;color:#000;white-space:nowrap;letter-spacing:-0.2px;transform-origin:0 0;transform:scaleX(0.95)">Home Phone</div></div>
<div style="position:absolute;left:761px;top:253px;width:17px;height:17px;box-sizing:border-box;border:1px solid #A9AEB7;background:linear-gradient(#F7F8FA,#EEF0F4)"></div>
<svg style="position:absolute;left:765px;top:260px;" width="7" height="4" viewBox="0 0 7 4"><path d="M0 0 H7 L3.5 4 Z" fill="#555"/></svg>
<div style="position:absolute;left:779px;top:243px;width:216px;height:27px;overflow:hidden;"><div style="position:absolute;left:2.5px;top:7.83px;font:bold 13.2px/13.2px 'Liberation Sans',sans-serif;color:#000;white-space:nowrap;letter-spacing:-0.2px;transform-origin:0 0;transform:scaleX(1)">Email</div></div>
<div style="position:absolute;left:978px;top:253px;width:17px;height:17px;box-sizing:border-box;border:1px solid #A9AEB7;background:linear-gradient(#F7F8FA,#EEF0F4)"></div>
<svg style="position:absolute;left:982px;top:260px;" width="7" height="4" viewBox="0 0 7 4"><path d="M0 0 H7 L3.5 4 Z" fill="#555"/></svg>
<div style="position:absolute;left:996px;top:243px;width:114px;height:27px;overflow:hidden;"><div style="position:absolute;left:2.5px;top:7.83px;font:bold 13.2px/13.2px 'Liberation Sans',sans-serif;color:#000;white-space:nowrap;letter-spacing:-0.2px;transform-origin:0 0;transform:scaleX(1)">Twitter ID</div></div>
<div style="position:absolute;left:1093px;top:253px;width:17px;height:17px;box-sizing:border-box;border:1px solid #A9AEB7;background:linear-gradient(#F7F8FA,#EEF0F4)"></div>
<svg style="position:absolute;left:1097px;top:260px;" width="7" height="4" viewBox="0 0 7 4"><path d="M0 0 H7 L3.5 4 Z" fill="#555"/></svg>
<div style="position:absolute;left:85px;top:272px;width:70px;height:16px;overflow:hidden;"><div style="position:absolute;left:2px;top:3.10px;font:11.7px/11.7px 'Liberation Sans',sans-serif;color:#000;white-space:nowrap;-webkit-text-stroke:0.12px #000;letter-spacing:0.2px;">Work</div></div>
<div style="position:absolute;left:156px;top:272px;width:81px;height:16px;overflow:hidden;"><div style="position:absolute;left:2px;top:3.10px;font:11.7px/11.7px 'Liberation Sans',sans-serif;color:#000;white-space:nowrap;-webkit-text-stroke:0.12px #000;letter-spacing:0.2px;">Stephen</div></div>
<div style="position:absolute;left:238px;top:272px;width:79px;height:16px;overflow:hidden;"><div style="position:absolute;left:2px;top:3.10px;font:11.7px/11.7px 'Liberation Sans',sans-serif;color:#000;white-space:nowrap;-webkit-text-stroke:0.12px #000;letter-spacing:0.2px;">Ruvituso</div></div>
<div style="position:absolute;left:318px;top:272px;width:81px;height:16px;overflow:hidden;"><div style="position:absolute;left:2px;top:3.10px;font:11.7px/11.7px 'Liberation Sans',sans-serif;color:#000;white-space:nowrap;-webkit-text-stroke:0.12px #000;letter-spacing:0.2px;">My Boss</div></div>
<div style="position:absolute;top:276.35px;font-size:11.4px;line-height:11.4px;color:#000;font-weight:normal;font-family:'Liberation Sans', sans-serif;white-space:nowrap;left:530.5px;width:0;display:flex;justify-content:center;-webkit-text-stroke:0.12px #000;">585-288-3018</div>
<div style="position:absolute;top:276.35px;font-size:11.4px;line-height:11.4px;color:#000;font-weight:normal;font-family:'Liberation Sans', sans-serif;white-space:nowrap;left:630.0px;width:0;display:flex;justify-content:center;-webkit-text-stroke:0.12px #000;">347-840-4245</div>
<div style="position:absolute;top:276.35px;font-size:11.4px;line-height:11.4px;color:#000;font-weight:normal;font-family:'Liberation Sans', sans-serif;white-space:nowrap;left:731.5px;width:0;display:flex;justify-content:center;-webkit-text-stroke:0.12px #000;">201-333-2004</div>
<div style="position:absolute;left:779px;top:272px;width:216px;height:16px;overflow:hidden;"><div style="position:absolute;left:2px;top:3.10px;font:11.7px/11.7px 'Liberation Sans',sans-serif;color:#000;white-space:nowrap;-webkit-text-stroke:0.12px #000;letter-spacing:0.2px;">stephen.ruvituso@ml.com</div></div>
<div style="position:absolute;left:996px;top:272px;width:114px;height:16px;overflow:hidden;"><div style="position:absolute;left:2px;top:3.10px;font:11.7px/11.7px 'Liberation Sans',sans-serif;color:#000;white-space:nowrap;-webkit-text-stroke:0.12px #000;letter-spacing:0.2px;">@Stephen_R</div></div>
<div style="position:absolute;left:85px;top:289px;width:70px;height:16px;overflow:hidden;"><div style="position:absolute;left:2px;top:3.10px;font:11.7px/11.7px 'Liberation Sans',sans-serif;color:#000;white-space:nowrap;-webkit-text-stroke:0.12px #000;letter-spacing:0.2px;">Personal</div></div>
<div style="position:absolute;left:156px;top:289px;width:81px;height:16px;overflow:hidden;"><div style="position:absolute;left:2px;top:3.10px;font:11.7px/11.7px 'Liberation Sans',sans-serif;color:#000;white-space:nowrap;-webkit-text-stroke:0.12px #000;letter-spacing:0.2px;">Rich</div></div>
<div style="position:absolute;left:238px;top:289px;width:79px;height:16px;overflow:hidden;"><div style="position:absolute;left:2px;top:3.10px;font:11.7px/11.7px 'Liberation Sans',sans-serif;color:#000;white-space:nowrap;-webkit-text-stroke:0.12px #000;letter-spacing:0.2px;">Abrams</div></div>
<div style="position:absolute;left:318px;top:289px;width:81px;height:16px;overflow:hidden;"><div style="position:absolute;left:2px;top:3.10px;font:11.7px/11.7px 'Liberation Sans',sans-serif;color:#000;white-space:nowrap;-webkit-text-stroke:0.12px #000;letter-spacing:0.2px;">Friend</div></div>
<div style="position:absolute;top:293.35px;font-size:11.4px;line-height:11.4px;color:#000;font-weight:normal;font-family:'Liberation Sans', sans-serif;white-space:nowrap;left:530.5px;width:0;display:flex;justify-content:center;-webkit-text-stroke:0.12px #000;">585-473-3757</div>
<div style="position:absolute;top:293.35px;font-size:11.4px;line-height:11.4px;color:#000;font-weight:normal;font-family:'Liberation Sans', sans-serif;white-space:nowrap;left:630.0px;width:0;display:flex;justify-content:center;-webkit-text-stroke:0.12px #000;">646-427-2065</div>
<div style="position:absolute;top:293.35px;font-size:11.4px;line-height:11.4px;color:#000;font-weight:normal;font-family:'Liberation Sans', sans-serif;white-space:nowrap;left:731.5px;width:0;display:flex;justify-content:center;-webkit-text-stroke:0.12px #000;">201-395-0400</div>
<div style="position:absolute;left:779px;top:289px;width:216px;height:16px;overflow:hidden;"><div style="position:absolute;left:2px;top:3.10px;font:11.7px/11.7px 'Liberation Sans',sans-serif;color:#000;white-space:nowrap;-webkit-text-stroke:0.12px #000;letter-spacing:0.2px;">richardabrams@ubs.com</div></div>
<div style="position:absolute;left:85px;top:306px;width:70px;height:16px;overflow:hidden;"><div style="position:absolute;left:2px;top:3.10px;font:11.7px/11.7px 'Liberation Sans',sans-serif;color:#000;white-space:nowrap;-webkit-text-stroke:0.12px #000;letter-spacing:0.2px;">Family</div></div>
<div style="position:absolute;left:156px;top:306px;width:81px;height:16px;overflow:hidden;"><div style="position:absolute;left:2px;top:3.10px;font:11.7px/11.7px 'Liberation Sans',sans-serif;color:#000;white-space:nowrap;-webkit-text-stroke:0.12px #000;letter-spacing:0.2px;">Corby</div></div>
<div style="position:absolute;left:238px;top:306px;width:79px;height:16px;overflow:hidden;"><div style="position:absolute;left:2px;top:3.10px;font:11.7px/11.7px 'Liberation Sans',sans-serif;color:#000;white-space:nowrap;-webkit-text-stroke:0.12px #000;letter-spacing:0.2px;">May</div></div>
<div style="position:absolute;left:318px;top:306px;width:81px;height:16px;overflow:hidden;"><div style="position:absolute;left:2px;top:3.10px;font:11.7px/11.7px 'Liberation Sans',sans-serif;color:#000;white-space:nowrap;-webkit-text-stroke:0.12px #000;letter-spacing:0.2px;">Uncle</div></div>
<div style="position:absolute;top:310.35px;font-size:11.4px;line-height:11.4px;color:#000;font-weight:normal;font-family:'Liberation Sans', sans-serif;white-space:nowrap;left:530.5px;width:0;display:flex;justify-content:center;-webkit-text-stroke:0.12px #000;">585-225-2200</div>
<div style="position:absolute;top:310.35px;font-size:11.4px;line-height:11.4px;color:#000;font-weight:normal;font-family:'Liberation Sans', sans-serif;white-space:nowrap;left:630.0px;width:0;display:flex;justify-content:center;-webkit-text-stroke:0.12px #000;">212-486-7090</div>
<div style="position:absolute;top:310.35px;font-size:11.4px;line-height:11.4px;color:#000;font-weight:normal;font-family:'Liberation Sans', sans-serif;white-space:nowrap;left:731.5px;width:0;display:flex;justify-content:center;-webkit-text-stroke:0.12px #000;">201-536-1500</div>
<div style="position:absolute;left:779px;top:306px;width:216px;height:16px;overflow:hidden;"><div style="position:absolute;left:2px;top:3.10px;font:11.7px/11.7px 'Liberation Sans',sans-serif;color:#000;white-space:nowrap;-webkit-text-stroke:0.12px #000;letter-spacing:0.2px;">wcorby_may@ml.com</div></div>
<div style="position:absolute;left:996px;top:306px;width:114px;height:16px;overflow:hidden;"><div style="position:absolute;left:2px;top:3.10px;font:11.7px/11.7px 'Liberation Sans',sans-serif;color:#000;white-space:nowrap;-webkit-text-stroke:0.12px #000;letter-spacing:0.2px;">@Corby11</div></div>
<div style="position:absolute;left:85px;top:323px;width:70px;height:16px;overflow:hidden;"><div style="position:absolute;left:2px;top:3.10px;font:11.7px/11.7px 'Liberation Sans',sans-serif;color:#000;white-space:nowrap;-webkit-text-stroke:0.12px #000;letter-spacing:0.2px;">Services</div></div>
<div style="position:absolute;left:156px;top:323px;width:81px;height:16px;overflow:hidden;"><div style="position:absolute;left:2px;top:3.10px;font:11.7px/11.7px 'Liberation Sans',sans-serif;color:#000;white-space:nowrap;-webkit-text-stroke:0.12px #000;letter-spacing:0.2px;">Nicole</div></div>
<div style="position:absolute;left:238px;top:323px;width:79px;height:16px;overflow:hidden;"><div style="position:absolute;left:2px;top:3.10px;font:11.7px/11.7px 'Liberation Sans',sans-serif;color:#000;white-space:nowrap;-webkit-text-stroke:0.12px #000;letter-spacing:0.2px;">Andres</div></div>
<div style="position:absolute;left:318px;top:323px;width:81px;height:16px;overflow:hidden;"><div style="position:absolute;left:2px;top:3.10px;font:11.7px/11.7px 'Liberation Sans',sans-serif;color:#000;white-space:nowrap;-webkit-text-stroke:0.12px #000;letter-spacing:0.2px;">Plumber</div></div>
<div style="position:absolute;left:400px;top:323px;width:85px;height:16px;overflow:hidden;"><div style="position:absolute;left:2px;top:3.10px;font:11.7px/11.7px 'Liberation Sans',sans-serif;color:#000;white-space:nowrap;-webkit-text-stroke:0.12px #000;letter-spacing:0.2px;">XYZ Plumber</div></div>
<div style="position:absolute;top:327.35px;font-size:11.4px;line-height:11.4px;color:#000;font-weight:normal;font-family:'Liberation Sans', sans-serif;white-space:nowrap;left:530.5px;width:0;display:flex;justify-content:center;-webkit-text-stroke:0.12px #000;">585-563-6648</div>
<div style="position:absolute;top:327.35px;font-size:11.4px;line-height:11.4px;color:#000;font-weight:normal;font-family:'Liberation Sans', sans-serif;white-space:nowrap;left:630.0px;width:0;display:flex;justify-content:center;-webkit-text-stroke:0.12px #000;">646-233-6736</div>
<div style="position:absolute;top:327.35px;font-size:11.4px;line-height:11.4px;color:#000;font-weight:normal;font-family:'Liberation Sans', sans-serif;white-space:nowrap;left:731.5px;width:0;display:flex;justify-content:center;-webkit-text-stroke:0.12px #000;">201-434-3392</div>
<div style="position:absolute;left:779px;top:323px;width:216px;height:16px;overflow:hidden;"><div style="position:absolute;left:2px;top:3.10px;font:11.7px/11.7px 'Liberation Sans',sans-serif;color:#000;white-space:nowrap;-webkit-text-stroke:0.12px #000;letter-spacing:0.2px;">nicole.primack@credit-suisse.com</div></div>
<div style="position:absolute;left:85px;top:340px;width:70px;height:16px;overflow:hidden;"><div style="position:absolute;left:2px;top:3.10px;font:11.7px/11.7px 'Liberation Sans',sans-serif;color:#000;white-space:nowrap;-webkit-text-stroke:0.12px #000;letter-spacing:0.2px;">Services</div></div>
<div style="position:absolute;left:156px;top:340px;width:81px;height:16px;overflow:hidden;"><div style="position:absolute;left:2px;top:3.10px;font:11.7px/11.7px 'Liberation Sans',sans-serif;color:#000;white-space:nowrap;-webkit-text-stroke:0.12px #000;letter-spacing:0.2px;">Leonard</div></div>
<div style="position:absolute;left:238px;top:340px;width:79px;height:16px;overflow:hidden;"><div style="position:absolute;left:2px;top:3.10px;font:11.7px/11.7px 'Liberation Sans',sans-serif;color:#000;white-space:nowrap;-webkit-text-stroke:0.12px #000;letter-spacing:0.2px;">Boccia</div></div>
<div style="position:absolute;left:318px;top:340px;width:81px;height:16px;overflow:hidden;"><div style="position:absolute;left:2px;top:3.10px;font:11.7px/11.7px 'Liberation Sans',sans-serif;color:#000;white-space:nowrap;-webkit-text-stroke:0.12px #000;letter-spacing:0.2px;">Electrician</div></div>
<div style="position:absolute;left:400px;top:340px;width:85px;height:16px;overflow:hidden;"><div style="position:absolute;left:2px;top:3.10px;font:11.7px/11.7px 'Liberation Sans',sans-serif;color:#000;white-space:nowrap;-webkit-text-stroke:0.12px #000;letter-spacing:0.2px;">ABC Electrician</div></div>
<div style="position:absolute;top:344.35px;font-size:11.4px;line-height:11.4px;color:#000;font-weight:normal;font-family:'Liberation Sans', sans-serif;white-space:nowrap;left:530.5px;width:0;display:flex;justify-content:center;-webkit-text-stroke:0.12px #000;">585-266-5770</div>
<div style="position:absolute;top:344.35px;font-size:11.4px;line-height:11.4px;color:#000;font-weight:normal;font-family:'Liberation Sans', sans-serif;white-space:nowrap;left:630.0px;width:0;display:flex;justify-content:center;-webkit-text-stroke:0.12px #000;">917-668-2222</div>
<div style="position:absolute;top:344.35px;font-size:11.4px;line-height:11.4px;color:#000;font-weight:normal;font-family:'Liberation Sans', sans-serif;white-space:nowrap;left:731.5px;width:0;display:flex;justify-content:center;-webkit-text-stroke:0.12px #000;">201-432-8111</div>
<div style="position:absolute;left:779px;top:340px;width:216px;height:16px;overflow:hidden;"><div style="position:absolute;left:2px;top:3.10px;font:11.7px/11.7px 'Liberation Sans',sans-serif;color:#000;white-space:nowrap;-webkit-text-stroke:0.12px #000;letter-spacing:0.2px;">Leonard.Boc@wellsfargoadvisors.com</div></div>
<div style="position:absolute;left:85px;top:357px;width:70px;height:16px;overflow:hidden;"><div style="position:absolute;left:2px;top:3.10px;font:11.7px/11.7px 'Liberation Sans',sans-serif;color:#000;white-space:nowrap;-webkit-text-stroke:0.12px #000;letter-spacing:0.2px;">Services</div></div>
<div style="position:absolute;left:156px;top:357px;width:81px;height:16px;overflow:hidden;"><div style="position:absolute;left:2px;top:3.10px;font:11.7px/11.7px 'Liberation Sans',sans-serif;color:#000;white-space:nowrap;-webkit-text-stroke:0.12px #000;letter-spacing:0.2px;">William</div></div>
<div style="position:absolute;left:238px;top:357px;width:79px;height:16px;overflow:hidden;"><div style="position:absolute;left:2px;top:3.10px;font:11.7px/11.7px 'Liberation Sans',sans-serif;color:#000;white-space:nowrap;-webkit-text-stroke:0.12px #000;letter-spacing:0.2px;">Einstein</div></div>
<div style="position:absolute;left:318px;top:357px;width:81px;height:16px;overflow:hidden;"><div style="position:absolute;left:2px;top:3.10px;font:11.7px/11.7px 'Liberation Sans',sans-serif;color:#000;white-space:nowrap;-webkit-text-stroke:0.12px #000;letter-spacing:0.2px;">Cable Tv</div></div>
<div style="position:absolute;left:400px;top:357px;width:85px;height:16px;overflow:hidden;"><div style="position:absolute;left:2px;top:3.10px;font:11.7px/11.7px 'Liberation Sans',sans-serif;color:#000;white-space:nowrap;-webkit-text-stroke:0.12px #000;letter-spacing:0.2px;">QWE Cable Tv</div></div>
<div style="position:absolute;top:361.35px;font-size:11.4px;line-height:11.4px;color:#000;font-weight:normal;font-family:'Liberation Sans', sans-serif;white-space:nowrap;left:530.5px;width:0;display:flex;justify-content:center;-webkit-text-stroke:0.12px #000;">585-209-9097</div>
<div style="position:absolute;top:361.35px;font-size:11.4px;line-height:11.4px;color:#000;font-weight:normal;font-family:'Liberation Sans', sans-serif;white-space:nowrap;left:630.0px;width:0;display:flex;justify-content:center;-webkit-text-stroke:0.12px #000;">347-308-9002</div>
<div style="position:absolute;top:361.35px;font-size:11.4px;line-height:11.4px;color:#000;font-weight:normal;font-family:'Liberation Sans', sans-serif;white-space:nowrap;left:731.5px;width:0;display:flex;justify-content:center;-webkit-text-stroke:0.12px #000;">201-222-1055</div>
<div style="position:absolute;left:779px;top:357px;width:216px;height:16px;overflow:hidden;"><div style="position:absolute;left:2px;top:3.10px;font:11.7px/11.7px 'Liberation Sans',sans-serif;color:#000;white-space:nowrap;-webkit-text-stroke:0.12px #000;letter-spacing:0.2px;">william.einstein@ubs.com</div></div>
<div style="position:absolute;left:85px;top:374px;width:70px;height:16px;overflow:hidden;"><div style="position:absolute;left:2px;top:3.10px;font:11.7px/11.7px 'Liberation Sans',sans-serif;color:#000;white-space:nowrap;-webkit-text-stroke:0.12px #000;letter-spacing:0.2px;">Health</div></div>
<div style="position:absolute;left:156px;top:374px;width:81px;height:16px;overflow:hidden;"><div style="position:absolute;left:2px;top:3.10px;font:11.7px/11.7px 'Liberation Sans',sans-serif;color:#000;white-space:nowrap;-webkit-text-stroke:0.12px #000;letter-spacing:0.2px;">Craig</div></div>
<div style="position:absolute;left:238px;top:374px;width:79px;height:16px;overflow:hidden;"><div style="position:absolute;left:2px;top:3.10px;font:11.7px/11.7px 'Liberation Sans',sans-serif;color:#000;white-space:nowrap;-webkit-text-stroke:0.12px #000;letter-spacing:0.2px;">Pastolove</div></div>
<div style="position:absolute;left:318px;top:374px;width:81px;height:16px;overflow:hidden;"><div style="position:absolute;left:2px;top:3.10px;font:11.7px/11.7px 'Liberation Sans',sans-serif;color:#000;white-space:nowrap;-webkit-text-stroke:0.12px #000;letter-spacing:0.2px;">Family Doctor</div></div>
<div style="position:absolute;top:378.35px;font-size:11.4px;line-height:11.4px;color:#000;font-weight:normal;font-family:'Liberation Sans', sans-serif;white-space:nowrap;left:530.5px;width:0;display:flex;justify-content:center;-webkit-text-stroke:0.12px #000;">585-723-3360</div>
<div style="position:absolute;top:378.35px;font-size:11.4px;line-height:11.4px;color:#000;font-weight:normal;font-family:'Liberation Sans', sans-serif;white-space:nowrap;left:630.0px;width:0;display:flex;justify-content:center;-webkit-text-stroke:0.12px #000;">646-218-9857</div>
<div style="position:absolute;top:378.35px;font-size:11.4px;line-height:11.4px;color:#000;font-weight:normal;font-family:'Liberation Sans', sans-serif;white-space:nowrap;left:731.5px;width:0;display:flex;justify-content:center;-webkit-text-stroke:0.12px #000;">201-839-5914</div>
<div style="position:absolute;left:779px;top:374px;width:216px;height:16px;overflow:hidden;"><div style="position:absolute;left:2px;top:3.10px;font:11.7px/11.7px 'Liberation Sans',sans-serif;color:#000;white-space:nowrap;-webkit-text-stroke:0.12px #000;letter-spacing:0.2px;">Craig.Pastolove@morganstanley.com</div></div>
<div style="position:absolute;left:85px;top:391px;width:70px;height:16px;overflow:hidden;"><div style="position:absolute;left:2px;top:3.10px;font:11.7px/11.7px 'Liberation Sans',sans-serif;color:#000;white-space:nowrap;-webkit-text-stroke:0.12px #000;letter-spacing:0.2px;">Health</div></div>
<div style="position:absolute;left:156px;top:391px;width:81px;height:16px;overflow:hidden;"><div style="position:absolute;left:2px;top:3.10px;font:11.7px/11.7px 'Liberation Sans',sans-serif;color:#000;white-space:nowrap;-webkit-text-stroke:0.12px #000;letter-spacing:0.2px;">Geri</div></div>
<div style="position:absolute;left:238px;top:391px;width:79px;height:16px;overflow:hidden;"><div style="position:absolute;left:2px;top:3.10px;font:11.7px/11.7px 'Liberation Sans',sans-serif;color:#000;white-space:nowrap;-webkit-text-stroke:0.12px #000;letter-spacing:0.2px;">Pell</div></div>
<div style="position:absolute;left:318px;top:391px;width:81px;height:16px;overflow:hidden;"><div style="position:absolute;left:2px;top:3.10px;font:11.7px/11.7px 'Liberation Sans',sans-serif;color:#000;white-space:nowrap;-webkit-text-stroke:0.12px #000;letter-spacing:0.2px;">Veterinary</div></div>
<div style="position:absolute;top:395.35px;font-size:11.4px;line-height:11.4px;color:#000;font-weight:normal;font-family:'Liberation Sans', sans-serif;white-space:nowrap;left:530.5px;width:0;display:flex;justify-content:center;-webkit-text-stroke:0.12px #000;">585-743-7047</div>
<div style="position:absolute;top:395.35px;font-size:11.4px;line-height:11.4px;color:#000;font-weight:normal;font-family:'Liberation Sans', sans-serif;white-space:nowrap;left:630.0px;width:0;display:flex;justify-content:center;-webkit-text-stroke:0.12px #000;">212-686-5566</div>
<div style="position:absolute;top:395.35px;font-size:11.4px;line-height:11.4px;color:#000;font-weight:normal;font-family:'Liberation Sans', sans-serif;white-space:nowrap;left:731.5px;width:0;display:flex;justify-content:center;-webkit-text-stroke:0.12px #000;">646-714-1779</div>
<div style="position:absolute;left:779px;top:391px;width:216px;height:16px;overflow:hidden;"><div style="position:absolute;left:2px;top:3.10px;font:11.7px/11.7px 'Liberation Sans',sans-serif;color:#000;white-space:nowrap;-webkit-text-stroke:0.12px #000;letter-spacing:0.2px;">geri.e.pell@ampf.com</div></div>
<div style="position:absolute;left:85px;top:408px;width:70px;height:16px;overflow:hidden;"><div style="position:absolute;left:2px;top:3.10px;font:11.7px/11.7px 'Liberation Sans',sans-serif;color:#000;white-space:nowrap;-webkit-text-stroke:0.12px #000;letter-spacing:0.2px;">Family</div></div>
<div style="position:absolute;left:156px;top:408px;width:81px;height:16px;overflow:hidden;"><div style="position:absolute;left:2px;top:3.10px;font:11.7px/11.7px 'Liberation Sans',sans-serif;color:#000;white-space:nowrap;-webkit-text-stroke:0.12px #000;letter-spacing:0.2px;">Richard</div></div>
<div style="position:absolute;left:238px;top:408px;width:79px;height:16px;overflow:hidden;"><div style="position:absolute;left:2px;top:3.10px;font:11.7px/11.7px 'Liberation Sans',sans-serif;color:#000;white-space:nowrap;-webkit-text-stroke:0.12px #000;letter-spacing:0.2px;">Salvino</div></div>
<div style="position:absolute;left:318px;top:408px;width:81px;height:16px;overflow:hidden;"><div style="position:absolute;left:2px;top:3.10px;font:11.7px/11.7px 'Liberation Sans',sans-serif;color:#000;white-space:nowrap;-webkit-text-stroke:0.12px #000;letter-spacing:0.2px;">Wife</div></div>
<div style="position:absolute;top:412.35px;font-size:11.4px;line-height:11.4px;color:#000;font-weight:normal;font-family:'Liberation Sans', sans-serif;white-space:nowrap;left:530.5px;width:0;display:flex;justify-content:center;-webkit-text-stroke:0.12px #000;">585-563-4776</div>
<div style="position:absolute;top:412.35px;font-size:11.4px;line-height:11.4px;color:#000;font-weight:normal;font-family:'Liberation Sans', sans-serif;white-space:nowrap;left:630.0px;width:0;display:flex;justify-content:center;-webkit-text-stroke:0.12px #000;">917-338-0645</div>
<div style="position:absolute;top:412.35px;font-size:11.4px;line-height:11.4px;color:#000;font-weight:normal;font-family:'Liberation Sans', sans-serif;white-space:nowrap;left:731.5px;width:0;display:flex;justify-content:center;-webkit-text-stroke:0.12px #000;">201-435-2874</div>
<div style="position:absolute;left:779px;top:408px;width:216px;height:16px;overflow:hidden;"><div style="position:absolute;left:2px;top:3.10px;font:11.7px/11.7px 'Liberation Sans',sans-serif;color:#000;white-space:nowrap;-webkit-text-stroke:0.12px #000;letter-spacing:0.2px;">richard_salvino@ml.com</div></div>
<div style="position:absolute;left:996px;top:408px;width:114px;height:16px;overflow:hidden;"><div style="position:absolute;left:2px;top:3.10px;font:11.7px/11.7px 'Liberation Sans',sans-serif;color:#000;white-space:nowrap;-webkit-text-stroke:0.12px #000;letter-spacing:0.2px;">@R_Salvino</div></div>
<div style="position:absolute;left:85px;top:425px;width:70px;height:16px;overflow:hidden;"><div style="position:absolute;left:2px;top:3.10px;font:11.7px/11.7px 'Liberation Sans',sans-serif;color:#000;white-space:nowrap;-webkit-text-stroke:0.12px #000;letter-spacing:0.2px;">Family</div></div>
<div style="position:absolute;left:156px;top:425px;width:81px;height:16px;overflow:hidden;"><div style="position:absolute;left:2px;top:3.10px;font:11.7px/11.7px 'Liberation Sans',sans-serif;color:#000;white-space:nowrap;-webkit-text-stroke:0.12px #000;letter-spacing:0.2px;">Frank</div></div>
<div style="position:absolute;left:238px;top:425px;width:79px;height:16px;overflow:hidden;"><div style="position:absolute;left:2px;top:3.10px;font:11.7px/11.7px 'Liberation Sans',sans-serif;color:#000;white-space:nowrap;-webkit-text-stroke:0.12px #000;letter-spacing:0.2px;">Sabia</div></div>
<div style="position:absolute;left:318px;top:425px;width:81px;height:16px;overflow:hidden;"><div style="position:absolute;left:2px;top:3.10px;font:11.7px/11.7px 'Liberation Sans',sans-serif;color:#000;white-space:nowrap;-webkit-text-stroke:0.12px #000;letter-spacing:0.2px;">Sister</div></div>
<div style="position:absolute;top:429.35px;font-size:11.4px;line-height:11.4px;color:#000;font-weight:normal;font-family:'Liberation Sans', sans-serif;white-space:nowrap;left:530.5px;width:0;display:flex;justify-content:center;-webkit-text-stroke:0.12px #000;">914-255-0575</div>
<div style="position:absolute;top:429.35px;font-size:11.4px;line-height:11.4px;color:#000;font-weight:normal;font-family:'Liberation Sans', sans-serif;white-space:nowrap;left:630.0px;width:0;display:flex;justify-content:center;-webkit-text-stroke:0.12px #000;">347-469-0378</div>
<div style="position:absolute;top:429.35px;font-size:11.4px;line-height:11.4px;color:#000;font-weight:normal;font-family:'Liberation Sans', sans-serif;white-space:nowrap;left:731.5px;width:0;display:flex;justify-content:center;-webkit-text-stroke:0.12px #000;">732-349-0111</div>
<div style="position:absolute;left:779px;top:425px;width:216px;height:16px;overflow:hidden;"><div style="position:absolute;left:2px;top:3.10px;font:11.7px/11.7px 'Liberation Sans',sans-serif;color:#000;white-space:nowrap;-webkit-text-stroke:0.12px #000;letter-spacing:0.2px;">Frank.J.Sabia@ubs.com</div></div>
<div style="position:absolute;left:996px;top:425px;width:114px;height:16px;overflow:hidden;"><div style="position:absolute;left:2px;top:3.10px;font:11.7px/11.7px 'Liberation Sans',sans-serif;color:#000;white-space:nowrap;-webkit-text-stroke:0.12px #000;letter-spacing:0.2px;">@Sabia</div></div>
<div style="position:absolute;left:85px;top:442px;width:70px;height:16px;overflow:hidden;"><div style="position:absolute;left:2px;top:3.10px;font:11.7px/11.7px 'Liberation Sans',sans-serif;color:#000;white-space:nowrap;-webkit-text-stroke:0.12px #000;letter-spacing:0.2px;">Family</div></div>
<div style="position:absolute;left:156px;top:442px;width:81px;height:16px;overflow:hidden;"><div style="position:absolute;left:2px;top:3.10px;font:11.7px/11.7px 'Liberation Sans',sans-serif;color:#000;white-space:nowrap;-webkit-text-stroke:0.12px #000;letter-spacing:0.2px;">Michael</div></div>
<div style="position:absolute;left:238px;top:442px;width:79px;height:16px;overflow:hidden;"><div style="position:absolute;left:2px;top:3.10px;font:11.7px/11.7px 'Liberation Sans',sans-serif;color:#000;white-space:nowrap;-webkit-text-stroke:0.12px #000;letter-spacing:0.2px;">Bapis</div></div>
<div style="position:absolute;left:318px;top:442px;width:81px;height:16px;overflow:hidden;"><div style="position:absolute;left:2px;top:3.10px;font:11.7px/11.7px 'Liberation Sans',sans-serif;color:#000;white-space:nowrap;-webkit-text-stroke:0.12px #000;letter-spacing:0.2px;">Brother</div></div>
<div style="position:absolute;top:446.35px;font-size:11.4px;line-height:11.4px;color:#000;font-weight:normal;font-family:'Liberation Sans', sans-serif;white-space:nowrap;left:530.5px;width:0;display:flex;justify-content:center;-webkit-text-stroke:0.12px #000;">212-673-8400</div>
<div style="position:absolute;top:446.35px;font-size:11.4px;line-height:11.4px;color:#000;font-weight:normal;font-family:'Liberation Sans', sans-serif;white-space:nowrap;left:630.0px;width:0;display:flex;justify-content:center;-webkit-text-stroke:0.12px #000;">212-704-4343</div>
<div style="position:absolute;top:446.35px;font-size:11.4px;line-height:11.4px;color:#000;font-weight:normal;font-family:'Liberation Sans', sans-serif;white-space:nowrap;left:731.5px;width:0;display:flex;justify-content:center;-webkit-text-stroke:0.12px #000;">732-662-2299</div>
<div style="position:absolute;left:779px;top:442px;width:216px;height:16px;overflow:hidden;"><div style="position:absolute;left:2px;top:3.10px;font:11.7px/11.7px 'Liberation Sans',sans-serif;color:#000;white-space:nowrap;-webkit-text-stroke:0.12px #000;letter-spacing:0.2px;">mbapis@hightoweradvisors.com</div></div>
<div style="position:absolute;left:996px;top:442px;width:114px;height:16px;overflow:hidden;"><div style="position:absolute;left:2px;top:3.10px;font:11.7px/11.7px 'Liberation Sans',sans-serif;color:#000;white-space:nowrap;-webkit-text-stroke:0.12px #000;letter-spacing:0.2px;">@MBapis</div></div>
<div style="position:absolute;left:1348px;top:179px;width:15px;height:15px;background:#fff;box-sizing:border-box;border:1px solid #C8C8C8"></div>
<svg style="position:absolute;left:1352px;top:184px;" width="7" height="4" viewBox="0 0 7 4"><path d="M0 4 H7 L3.5 0 Z" fill="#6A6A6A"/></svg>
<div style="position:absolute;left:1348px;top:194px;width:15px;height:115px;background:#fff;box-sizing:border-box;border:1px solid #9E9E9E"></div>
<div style="position:absolute;left:1348px;top:309px;width:15px;height:353px;background:#DADADA"></div>
<div style="position:absolute;left:1348px;top:662px;width:15px;height:15px;background:#fff;box-sizing:border-box;border:1px solid #C8C8C8"></div>
<svg style="position:absolute;left:1352px;top:667px;" width="7" height="4" viewBox="0 0 7 4"><path d="M0 0 H7 L3.5 4 Z" fill="#6A6A6A"/></svg>
<div style="position:absolute;left:0px;top:679px;width:1365px;height:1px;background:#A0A0A0"></div>
<div style="position:absolute;left:0px;top:680px;width:1365px;height:20px;background:#F1F1F1"></div>
<div style="position:absolute;top:684.22px;font-size:11.2px;line-height:11.2px;color:#444;font-weight:normal;font-family:'Liberation Sans', sans-serif;white-space:nowrap;left:7.5px;">Ready</div>
<div style="position:absolute;left:1080px;top:680px;width:38px;height:20px;background:#C6C6C6"></div>
<svg style="position:absolute;left:1091px;top:683px;" width="15" height="14" viewBox="0 0 15 14"><g fill="none" stroke="#666" stroke-width="1"><rect x="0.5" y="0.5" width="13" height="12"/>
<path d="M4.8 0.5 V12.5 M9.2 0.5 V12.5 M0.5 4.5 H13.5 M0.5 8.5 H13.5"/></g></svg>
<svg style="position:absolute;left:1130px;top:683px;" width="15" height="14" viewBox="0 0 15 14"><g fill="none" stroke="#666" stroke-width="1"><rect x="0.5" y="0.5" width="13" height="12"/>
<rect x="3.5" y="3" width="7" height="7.5"/><path d="M5 5 H9 M5 7 H9 M5 9 H9"/></g></svg>
<svg style="position:absolute;left:1168px;top:683px;" width="15" height="14" viewBox="0 0 15 14"><g fill="none" stroke="#666" stroke-width="1"><rect x="0.5" y="0.5" width="13" height="12"/>
<path d="M4.5 0.5 V6.5 H9.5 V0.5 M7 0.5 V6.5"/></g></svg>
<div style="position:absolute;left:1199px;top:689px;width:7px;height:2px;background:#555"></div>
<div style="position:absolute;left:1209px;top:689px;width:100px;height:1px;background:#9E9E9E"></div>
<div style="position:absolute;left:1249px;top:684px;width:4px;height:11px;background:#666"></div>
<div style="position:absolute;left:1259px;top:687px;width:1px;height:5px;background:#9E9E9E"></div>
<div style="position:absolute;left:1313px;top:689px;width:8px;height:2px;background:#555"></div>
<div style="position:absolute;left:1316px;top:686px;width:2px;height:8px;background:#555"></div>
<div style="position:absolute;top:684.89px;font-size:11px;line-height:11px;color:#444;font-weight:normal;font-family:'Liberation Sans', sans-serif;white-space:nowrap;left:1336px;">%85</div>
</div></body></html>
